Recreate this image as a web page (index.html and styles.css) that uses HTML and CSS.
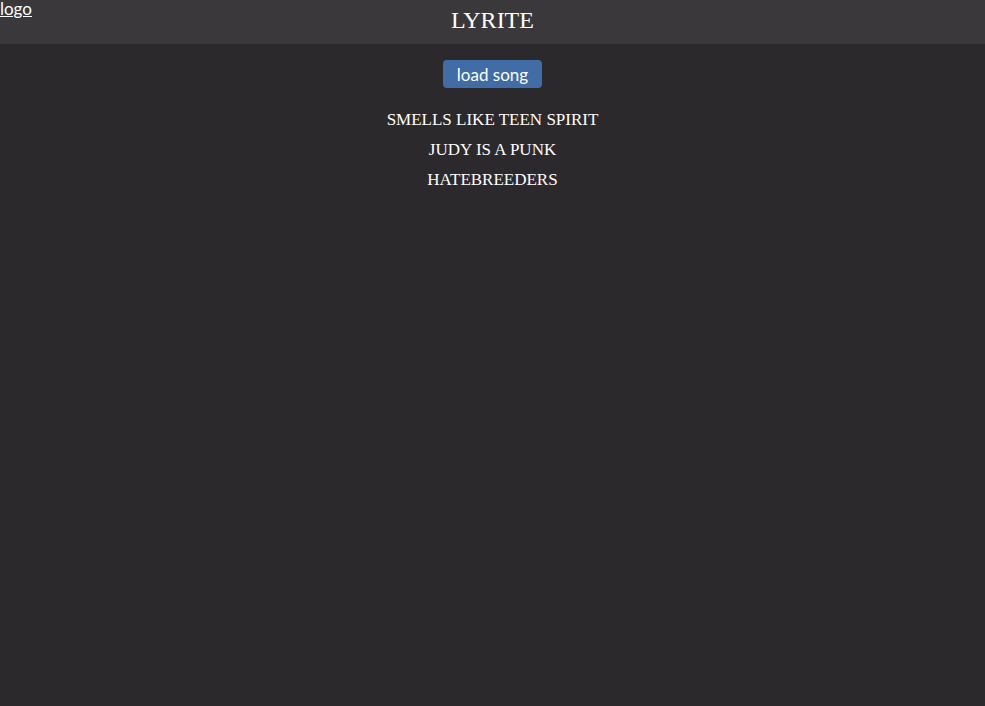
FILE: index.html
```html
<!DOCTYPE html>
<html>
<head>
<meta charset="utf-8">
<title>Lyrite</title>
<link rel="stylesheet" href="styles.css">
</head>
<body>
<header class="topbar">
  <a class="logo" href="#">logo</a>
  <h1 class="brand">LYRITE</h1>
</header>
<main class="content">
  <button class="load-btn">load song</button>
  <ul class="songs">
    <li class="song">SMELLS LIKE TEEN SPIRIT</li>
    <li class="song">JUDY IS A PUNK</li>
    <li class="song">HATEBREEDERS</li>
  </ul>
</main>
</body>
</html>
```

FILE: styles.css
```css
html, body {
  margin: 0;
  padding: 0;
  height: 100%;
}
body {
  background: #2c292c;
  color: #ffffff;
  font-family: "Liberation Serif", serif;
}
.topbar {
  position: relative;
  height: 44px;
  background: #3a383b;
  display: flex;
  align-items: center;
  justify-content: center;
}
.logo {
  position: absolute;
  left: 0;
  top: 0;
  color: #ffffff;
  font-family: "Lato", sans-serif;
  font-size: 17px;
  line-height: 17px;
  text-decoration: underline;
}
.brand {
  margin: 0;
  font-family: "Liberation Serif", serif;
  font-weight: normal;
  font-size: 24px;
  line-height: 1;
  padding-bottom: 4px;
}
.content {
  display: flex;
  flex-direction: column;
  align-items: center;
  padding-top: 16px;
}
.load-btn {
  background: #416ca6;
  color: #ffffff;
  border: none;
  border-radius: 4px;
  font-family: "Lato", sans-serif;
  font-size: 17px;
  height: 28px;
  padding: 0 14px;
  cursor: pointer;
}
.songs {
  list-style: none;
  margin: 0;
  padding: 0;
  margin-top: 17px;
  display: flex;
  flex-direction: column;
  align-items: center;
}
.song {
  font-size: 17px;
  line-height: 30px;
}
```
